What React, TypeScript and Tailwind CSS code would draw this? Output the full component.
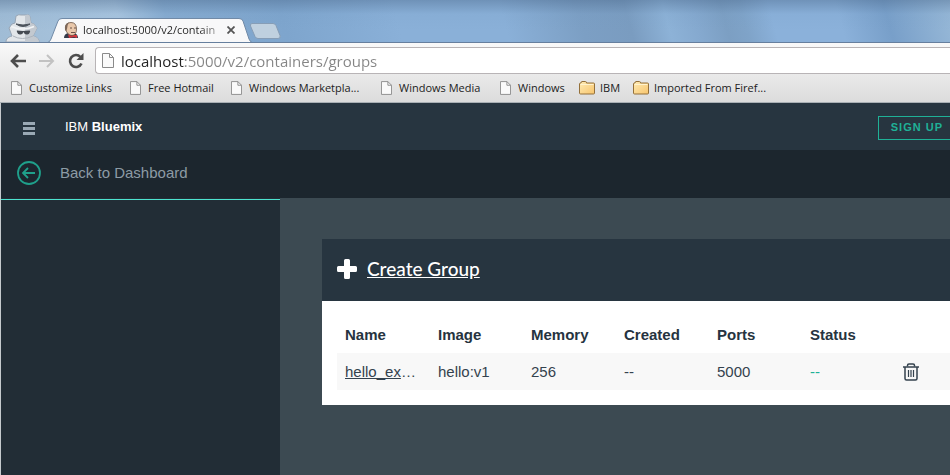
import React from "react";

const bookmarks = [
  { label: "Customize Links", folder: false, width: "w-[119px]" },
  { label: "Free Hotmail", folder: false, width: "w-[101px]" },
  { label: "Windows Marketpla...", folder: false, width: "w-[150px]" },
  { label: "Windows Media", folder: false, width: "w-[119px]" },
  { label: "Windows", folder: false, width: "w-[79px]" },
  { label: "IBM", folder: true, width: "w-[54px]" },
  { label: "Imported From Firef...", folder: true, width: "w-[150px]" },
];

const columns = ["Name", "Image", "Memory", "Created", "Ports", "Status"];

function PageIcon({ className }: { className: string }) {
  return (
    <svg viewBox="0 0 12 15" className={className} aria-hidden="true">
      <path d="M.5.5h7l4 4v10H.5z" fill="#fafafa" stroke="#8a8a8a" />
      <path d="M7.5.5v4h4" fill="none" stroke="#8a8a8a" />
    </svg>
  );
}

function FolderIcon() {
  return (
    <svg viewBox="0 0 16 14" className="h-[14px] w-4 shrink-0" aria-hidden="true">
      <defs>
        <linearGradient id="folder" x1="0" y1="0" x2="1" y2="1">
          <stop offset="0" stopColor="#ffecb5" />
          <stop offset="1" stopColor="#f7c46c" />
        </linearGradient>
      </defs>
      <path
        d="M.5 12V3q0-1 1-1H2q0-1.500 1-1.500h3.500q1 0 1 1.500H14.500q1 0 1 1v9q0 1-1 1h-13q-1 0-1-1z"
        fill="url(#folder)"
        stroke="#94703a"
      />
      <path d="M1.500 3.500h13" stroke="#fff3cf" />
    </svg>
  );
}

function Incognito() {
  return (
    <svg viewBox="0 0 36 28" className="ml-[5px] h-7 w-9 shrink-0 self-end" aria-hidden="true">
      <path d="M1 28c0-3 2-5 6-6L4 14l3-4 3-1 1-7q3-2 5-1h5q4-1 4 2l1 6 3 1 3 4-4 8c4 1 6 3 6 6z" fill="#e2e6ea" stroke="#98a5b4" />
      <path d="M20 1h1q4-1 4 2l1 6 3 1 3 4-4 8c4 1 6 3 6 6H20z" fill="#c3c9d0" />
      <path d="M11 10q7 5 14 0-7 2-14 0z" fill="#4c535c" stroke="#4c535c" />
      <path d="M6 12.500q12 5 23 0" fill="none" stroke="#f1f3f5" strokeWidth="1.500" />
      <path d="M12 16.500l5.500.5h1l6-.5q1 0 .5 1.500-1 3-3.500 2.500-2 0-3-2.500-1 2.500-3 2.500-2.500.5-3.500-2.500-.5-1.500 0-1.500z" fill="#454b53" />
      <path d="M8 22q9 5 20 0" fill="none" stroke="#aeb5bd" />
    </svg>
  );
}

function Favicon() {
  return (
    <svg viewBox="0 0 16 16" className="h-4 w-4 shrink-0" aria-hidden="true">
      <path d="M1 16q0-4 4-5h6q4 1 4 5z" fill="#343b4a" />
      <path d="M2.500 7Q2 .5 8 .5q5.500 0 5.500 6.500 0 6-4.500 6.500-4.500 0-6.500-6.500z" fill="#e9c8ab" stroke="#6b5444" strokeWidth=".8" />
      <path d="M2 8Q1 1.500 6 .5 4 3 4 7l-1 2z" fill="#7d685a" />
      <path d="M7 6h2m2 0h2M8 10.500h4" stroke="#6b5248" />
      <path d="M5 12.500l4 1.500 2-1 3 0v3l-3-1-5 1z" fill="#d0363c" />
    </svg>
  );
}

function Trash() {
  return (
    <svg viewBox="0 0 16 18" className="h-[18px] w-4" fill="none" stroke="#34424e" aria-hidden="true">
      <path d="M0 4h16" strokeWidth="1.500" />
      <path d="M4.500 3.500V2.500q0-1.500 1.500-1.500h4q1.500 0 1.500 1.500v1" strokeWidth="1.500" />
      <path d="M2 4v11.500q0 1.500 1.500 1.500h9q1.500 0 1.500-1.500V4" strokeWidth="1.500" />
      <path d="M5.500 7v7M8 7v7M10.500 7v7" strokeWidth="1.200" />
    </svg>
  );
}

function BrowserChrome() {
  return (
    <header className="font-['Open_Sans','Noto_Sans',sans-serif] text-[#222]">
      <div className="flex h-[43px] items-end overflow-hidden border-b border-[#667f9e] bg-[linear-gradient(180deg,rgba(70,100,135,0.4)_0px,rgba(110,150,190,0.1)_14px,transparent_30px),linear-gradient(75deg,#a0bcd5_0%,#a9c5df_13%,#86abd0_18%,#7ea5cd_30%,#8ab0d8_42%,#8ab0d8_53%,#7c9fc4_61%,#7a9cc0_66%,#8db2d7_70%,#85a9cf_73%,#7c9fc3_76%,#7fa3c8_78%,#8bb1da_81%,#8bb1da_88%,#789fc9_93%,#98b9d8_100%)]">
        <Incognito />
        <div className="relative ml-[6px] h-6 w-[206px] shrink-0">
          <svg viewBox="0 0 206 25" className="absolute inset-x-0 top-0 h-[25px] w-full" aria-hidden="true">
            <path d="M0 25q3-1 4-4l7-18q1-2.500 4-2.500h177q3 0 4 2.500l6 18q1 3 4 4z" fill="#f8f8f9" stroke="#718aa7" />
          </svg>
          <div className="relative flex h-6 items-center pl-4">
            <Favicon />
            <span className="ml-[4px] w-[137px] whitespace-nowrap bg-linear-to-r from-[#222] from-85% to-[#bbb] bg-clip-text text-[11px] text-transparent">
              localhost:5000/v2/contain
            </span>
            <button aria-label="Close tab" className="ml-[5px] flex h-4 w-3 items-center justify-center">
              <svg viewBox="0 0 8 8" className="h-2 w-2" stroke="#555" strokeWidth="1.800" aria-hidden="true">
                <path d="M.5.5l7 7M7.500.5l-7 7" />
              </svg>
            </button>
          </div>
        </div>
        <button aria-label="New tab" className="mb-[3px] -ml-1 h-4 w-8 shrink-0">
          <svg viewBox="0 0 32 16" className="h-4 w-8" aria-hidden="true">
            <path d="M3 .5h21q2 0 3 2l4 10q1 3-2 3H9q-2 0-3-2L1.500 3Q1 .5 3 .5z" fill="#bfd0df" stroke="#869db6" />
          </svg>
        </button>
      </div>

      <div className="border-b border-[#a9b0b5] bg-linear-to-b from-[#f9f9f9] to-[#dcdcdc]">
        <div className="flex items-center pt-1">
          <button aria-label="Back" className="ml-[10px]">
            <svg viewBox="0 0 16 14" className="h-[14px] w-4" fill="none" stroke="#4d4d4d" strokeWidth="2.600" aria-hidden="true">
              <path d="M8 1L2 7l6 6M2 7h14" />
            </svg>
          </button>
          <button aria-label="Forward" className="ml-[13px]">
            <svg viewBox="0 0 16 14" className="h-[14px] w-4" fill="none" stroke="#c2c2c2" strokeWidth="2" aria-hidden="true">
              <path d="M8 1l6 6-6 6M14 7H0" />
            </svg>
          </button>
          <button aria-label="Reload" className="ml-[13px]">
            <svg viewBox="0 0 16 16" className="h-4 w-4" aria-hidden="true">
              <path d="M12.500 4A6 6 0 1 0 13.500 10.500" fill="none" stroke="#4d4d4d" strokeWidth="2.600" />
              <path d="M15.500 0v7H8.500z" fill="#4d4d4d" />
            </svg>
          </button>
          <div className="ml-[11px] flex h-[27px] grow items-center rounded-l-sm border border-r-0 border-[#b8b4b6] bg-white pl-[6px]">
            <PageIcon className="h-[15px] w-3 shrink-0" />
            <div className="ml-[7px] grow text-[15px] leading-6">
              <input
                aria-label="Address"
                defaultValue="localhost:5000/v2/containers/groups"
                className="block w-full bg-linear-to-r from-[#222] from-[64px] to-[#858585] to-[64px] bg-clip-text text-transparent outline-none"
              />
            </div>
          </div>
        </div>
        <nav aria-label="Bookmarks" className="flex h-7 items-center pl-[11px] text-[11px]">
          {bookmarks.map((b) => (
            <a key={b.label} href="#" className={`flex shrink-0 items-center whitespace-nowrap ${b.width}`}>
              {b.folder ? <FolderIcon /> : <PageIcon className="h-[14px] w-[11px] shrink-0" />}
              <span className={b.folder ? "ml-[5px]" : "ml-[7px]"}>{b.label}</span>
            </a>
          ))}
        </nav>
      </div>
    </header>
  );
}

export default function App() {
  return (
    <div className="flex min-h-screen flex-col overflow-x-hidden bg-[#3c4a52] font-['Liberation_Sans',Arial,sans-serif] text-[15px]">
      <BrowserChrome />
      <div className="flex grow flex-col border-l border-[#c5cacd]">
        <div className="flex h-[47px] items-center bg-[#273540]">
          <button aria-label="Menu" className="ml-[22px] mt-1 flex w-3 flex-col gap-[2px]">
            <span className="h-[3px] bg-[#9aa9b5]" />
            <span className="h-[3px] bg-[#9aa9b5]" />
            <span className="h-[3px] bg-[#9aa9b5]" />
          </button>
          <div className="ml-[30px] grow text-[13px] text-white">
            IBM <b>Bluemix</b>
          </div>
          <button className="mt-[2px] h-6 border border-r-0 border-[#1fb197] pl-3 pr-[7px] text-[11px] font-bold tracking-[1px] text-[#1fb197]">
            SIGN UP
          </button>
        </div>
        <a href="#" className="flex h-12 items-center bg-[#1c262e] pb-[2px] pl-4 text-[#8d9ba5]">
          <svg viewBox="0 0 24 24" className="h-6 w-6" fill="none" stroke="#1fa08b" strokeWidth="1.800" aria-hidden="true">
            <circle cx="12" cy="12" r="11" />
            <path d="M11 7l-5 5 5 5M6 12h12" />
          </svg>
          <span className="ml-[19px]">Back to Dashboard</span>
        </a>
        <div className="flex grow">
          <aside className="w-[279px] shrink-0 bg-[#222d36] pt-px">
            <div className="h-px bg-[#4de3cf]" />
          </aside>
          <main className="min-w-0 grow pt-[41px] pl-[42px]">
            <section className="bg-white">
              <div className="flex h-[62px] items-center bg-[#273540] pb-[2px] pl-[15px] text-white">
                <svg viewBox="0 0 20 20" className="h-5 w-5" fill="#fff" aria-hidden="true">
                  <path d="M8.500 0h3q1.500 0 1.500 1.500V7h5.500Q20 7 20 8.500v3q0 1.500-1.500 1.500H13v5.500q0 1.500-1.500 1.500h-3Q7 20 7 18.500V13H1.500Q0 13 0 11.500v-3Q0 7 1.500 7H7V1.500Q7 0 8.500 0z" />
                </svg>
                <a href="#" className="ml-[10px] font-['Lato',sans-serif] text-[19px] font-medium underline">
                  Create Group
                </a>
              </div>
              <div className="py-[15px] pl-[15px]">
                <table className="w-full table-fixed text-left text-[#34424e]">
                  <thead>
                    <tr className="h-[37px] text-[#263340]">
                      {columns.map((c) => (
                        <th key={c} className="w-[93px] px-2 pt-[2px] font-bold">{c}</th>
                      ))}
                      <th aria-label="Actions" />
                    </tr>
                  </thead>
                  <tbody>
                    <tr className="h-[37px] bg-[#f8f8f8]">
                      <td className="whitespace-nowrap px-2 pt-[2px]">
                        <a href="#" className="underline">hello_ex</a>…
                      </td>
                      <td className="px-2 pt-[2px]">hello:v1</td>
                      <td className="px-2 pt-[2px]">256</td>
                      <td className="px-2 pt-[2px]">--</td>
                      <td className="px-2 pt-[2px]">5000</td>
                      <td className="px-2 pt-[2px] text-[#1fb197]">--</td>
                      <td className="px-2">
                        <button aria-label="Delete group" className="block">
                          <Trash />
                        </button>
                      </td>
                    </tr>
                  </tbody>
                </table>
              </div>
            </section>
          </main>
        </div>
      </div>
    </div>
  );
}
